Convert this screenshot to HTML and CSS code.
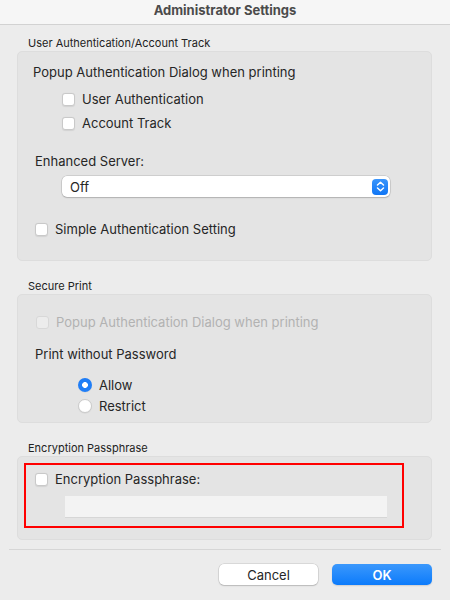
FILE: index.html
```html
<!DOCTYPE html>
<html>
<head>
<meta charset="utf-8">
<link rel="stylesheet" href="styles.css">
</head>
<body>
<div class="window">
  <div class="titlebar">Administrator Settings</div>
  <div class="content">
    <div class="section-label first">User Authentication/Account Track</div>
    <div class="panel p1">
      <div class="heading">Popup Authentication Dialog when printing</div>
      <div class="indent-group">
        <label class="row"><span class="cb"></span><span>User Authentication</span></label>
        <label class="row"><span class="cb"></span><span>Account Track</span></label>
      </div>
      <div class="heading sub">Enhanced Server:</div>
      <div class="select">
        <span class="select-text">Off</span>
        <span class="stepper">
          <svg width="9" height="11" viewBox="0 0 9 11"><path d="M1.5 4 L4.5 1.3 L7.5 4 M1.5 7 L4.5 9.7 L7.5 7" fill="none" stroke="#fff" stroke-width="1.5" stroke-linecap="round" stroke-linejoin="round"/></svg>
        </span>
      </div>
      <label class="row simple"><span class="cb"></span><span>Simple Authentication Setting</span></label>
    </div>

    <div class="section-label">Secure Print</div>
    <div class="panel p2">
      <label class="row disabled"><span class="cb"></span><span>Popup Authentication Dialog when printing</span></label>
      <div class="heading pwp">Print without Password</div>
      <div class="radios">
        <label class="rrow"><span class="radio on"></span><span>Allow</span></label>
        <label class="rrow"><span class="radio"></span><span>Restrict</span></label>
      </div>
    </div>

    <div class="section-label">Encryption Passphrase</div>
    <div class="panel p3">
      <div class="highlight">
        <label class="row"><span class="cb"></span><span>Encryption Passphrase:</span></label>
        <div class="field"></div>
      </div>
    </div>
  </div>
  <div class="separator"></div>
  <div class="buttons">
    <button class="btn cancel">Cancel</button>
    <button class="btn ok">OK</button>
  </div>
</div>
</body>
</html>
```

FILE: styles.css
```css
* { box-sizing: border-box; }
html, body { margin: 0; padding: 0; }
body {
  width: 450px;
  height: 600px;
  background: #ececec;
  font-family: Inter, "Liberation Sans", Arial, sans-serif;
  color: #262626;
  overflow: hidden;
}
.window { width: 450px; height: 600px; }
.titlebar {
  height: 25px;
  background: #f6f6f6;
  border-bottom: 1px solid #d2d2d2;
  text-align: center;
  font-weight: bold;
  font-size: 13px;
  line-height: 21px;
  color: #4b4b4b;
}
.content { padding: 0 18px 0 17px; }
.section-label {
  font-size: 11px;
  line-height: 14px;
  height: 14px;
  margin: 18px 0 0 11px;
  color: #222;
}
.section-label.first { margin-top: 11px; }
.panel {
  background: #e4e4e4;
  border: 1px solid #dddddd;
  border-radius: 5px;
  margin-top: 1px;
  padding-left: 16px;
}
.heading { font-size: 13px; line-height: 16px; height: 16px; }
.p1 { height: 210px; padding-top: 12px; }
.p1 .heading { margin-left: -1px; }
.indent-group { margin-top: 7px; margin-left: 28px; }
.row {
  display: flex;
  align-items: center;
  gap: 7px;
  height: 24px;
  font-size: 13px;
}
.cb {
  width: 13px;
  height: 13px;
  flex: none;
  background: #fff;
  border: 1px solid #c9c9c9;
  border-radius: 3px;
  box-shadow: 0 0.5px 1px rgba(0,0,0,0.08);
}
.heading.sub { margin-top: 18px; margin-left: 1px; }
.select {
  margin: 7px 0 0 28px;
  width: 328px;
  height: 21px;
  background: #fff;
  border-radius: 5px;
  box-shadow: 0 0 0 0.5px rgba(0,0,0,0.18), 0 1px 1.5px rgba(0,0,0,0.15);
  display: flex;
  align-items: center;
  justify-content: space-between;
  padding: 0 2px 0 8px;
  font-size: 13px;
}
.stepper {
  width: 16px;
  height: 16px;
  border-radius: 4px;
  background: linear-gradient(#3a95fb, #1076f5);
  display: flex;
  align-items: center;
  justify-content: center;
}
.stepper svg { display: block; }
.row.simple { margin-top: 20px; margin-left: 1px; }

.p2 { height: 129px; padding-top: 15px; }
.row.disabled { color: #b2b2b2; margin-left: 2px; }
.row.disabled .cb { background: #ececec; border-color: #d8d8d8; box-shadow: none; }
.heading.pwp { margin-top: 12px; margin-left: 1px; }
.radios { margin: 12px 0 0 44px; }
.rrow {
  display: flex;
  align-items: center;
  gap: 7px;
  height: 21px;
  font-size: 13px;
}
.radio {
  width: 14px;
  height: 14px;
  flex: none;
  border-radius: 50%;
  background: #fff;
  border: 1px solid #cbcbcb;
  box-shadow: 0 0.5px 1px rgba(0,0,0,0.08);
}
.radio.on {
  border: none;
  background: radial-gradient(circle, #fff 0 2.6px, #1f7df6 3.2px);
}

.p3 { height: 84px; padding: 6px 0 0 6px; }
.highlight {
  width: 380px;
  height: 65px;
  border: 2px solid #ff0000;
  padding: 2px 0 0 9px;
}
.field {
  margin: 5px 0 0 30px;
  width: 322px;
  height: 22px;
  background: #f3f3f3;
  border-bottom: 1px solid #d6d6d6;
}
.separator {
  margin: 9px 9px 0 9px;
  height: 1px;
  background: #d6d6d6;
}
.buttons {
  display: flex;
  justify-content: flex-end;
  gap: 14px;
  padding: 14px 18px 0 0;
}
.btn {
  height: 21px;
  border: none;
  border-radius: 5px;
  font-family: Inter, "Liberation Sans", Arial, sans-serif;
  font-size: 13px;
  padding: 0;
}
.cancel {
  width: 99px;
  background: #fff;
  color: #262626;
  box-shadow: 0 0 0 0.5px rgba(0,0,0,0.16), 0 1px 1.5px rgba(0,0,0,0.15);
}
.ok {
  width: 100px;
  background: linear-gradient(#3b98fc, #0c7bfb);
  color: #fff;
  font-weight: 600;
  box-shadow: 0 1px 1.5px rgba(0,0,0,0.12);
}
```
